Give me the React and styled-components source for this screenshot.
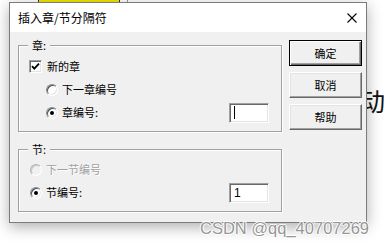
import React from "react";
import styled, { createGlobalStyle } from "styled-components";

const GlobalStyle = createGlobalStyle`
  *, *::before, *::after { box-sizing: border-box; }
  html, body { margin: 0; padding: 0; background: #fff; }
  body { font-family: "Noto Sans CJK SC", "Liberation Sans", sans-serif; }
`;

const Desk = styled.div`
  position: relative;
  width: 386px;
  height: 247px;
  overflow: hidden;
  background: #fff;
`;

const YellowMark = styled.div`
  position: absolute;
  left: 38px;
  top: 0;
  width: 82px;
  height: 2px;
  background: #f2e600;
  border-left: 1px solid #333;
  border-right: 1px solid #333;
`;

const GreyMark = styled.div`
  position: absolute;
  left: 127px;
  top: 0;
  width: 1px;
  height: 2px;
  background: #999;
`;

const BehindText = styled.span`
  position: absolute;
  left: 360px;
  top: 86px;
  font-size: 25px;
  line-height: 28px;
  color: #111;
`;

const Window = styled.div`
  position: absolute;
  z-index: 1;
  left: 9px;
  top: 2px;
  width: 358px;
  height: 221px;
  border: 1px solid #7c7c7c;
  background: #f0f0f0;
  box-shadow: 0 4px 14px rgba(0, 0, 0, 0.32);
  display: flex;
  flex-direction: column;
`;

const TitleBar = styled.div`
  height: 29px;
  flex: none;
  background: #fff;
  display: flex;
  align-items: center;
  justify-content: space-between;
  padding: 0 9px 0 8px;
`;

const Title = styled.span`
  font-size: 12px;
  line-height: 14px;
  color: #000;
`;

const Body = styled.div`
  display: flex;
  align-items: flex-start;
  padding: 8px 0 0 8px;
`;

const LeftColumn = styled.div`
  width: 264px;
  padding-top: 5px;
  display: flex;
  flex-direction: column;
  gap: 17px;
`;

const GroupBox = styled.div`
  position: relative;
  border: 1px solid #a0a0a0;
  box-shadow: inset 1px 1px 0 #fff, 1px 1px 0 #fff;
  padding: ${(p) => p.$pad};
  display: flex;
  flex-direction: column;
`;

const Legend = styled.span`
  position: absolute;
  left: 9px;
  top: -8px;
  padding: 0 4px;
  background: #f0f0f0;
  font-size: 11px;
  line-height: 14px;
  color: #000;
`;

const Row = styled.div`
  height: 23px;
  display: flex;
  align-items: center;
  padding-left: ${(p) => p.$indent || 0}px;
  padding-right: 12px;
`;

const Label = styled.span`
  font-size: 11px;
  line-height: 13px;
  margin-left: ${(p) => p.$gap}px;
  color: ${(p) => (p.$disabled ? "#a0a0a0" : "#000")};
  text-shadow: ${(p) => (p.$disabled ? "1px 1px 0 #fff" : "none")};
`;

const CheckBox = styled.span`
  width: 13px;
  height: 13px;
  flex: none;
  background: #fff;
  border: 1px solid;
  border-color: #a0a0a0 #fff #fff #a0a0a0;
  box-shadow: inset 1px 1px 0 #696969, inset -1px -1px 0 #e3e3e3;
  display: flex;
  align-items: center;
  justify-content: center;
`;

const Radio = styled.span`
  width: 12px;
  height: 12px;
  flex: none;
  border-radius: 50%;
  background: ${(p) => (p.$disabled ? "#f0f0f0" : "#fff")};
  border: 1px solid;
  border-color: ${(p) =>
    p.$disabled ? "#b4b4b4 #fff #fff #b4b4b4" : "#8a8a8a #fff #fff #8a8a8a"};
  box-shadow: ${(p) =>
    p.$disabled
      ? "inset 1px 1px 0 #c8c8c8"
      : "inset 1px 1px 0 #505050, inset -1px -1px 0 #e3e3e3"};
  display: flex;
  align-items: center;
  justify-content: center;
`;

const Dot = styled.span`
  width: 4px;
  height: 4px;
  border-radius: 50%;
  background: #000;
`;

const TextBox = styled.span`
  margin-left: auto;
  width: 40px;
  height: 20px;
  flex: none;
  background: #fff;
  border: 1px solid;
  border-color: #a0a0a0 #fff #fff #a0a0a0;
  box-shadow: inset 1px 1px 0 #696969, inset -1px -1px 0 #e3e3e3;
  display: flex;
  align-items: center;
  padding-left: 4px;
  font-family: "Liberation Sans", sans-serif;
  font-size: 12px;
  color: #000;
`;

const Caret = styled.span`
  width: 1px;
  height: 13px;
  background: #000;
`;

const Buttons = styled.div`
  width: 73px;
  margin-left: 7px;
  display: flex;
  flex-direction: column;
  gap: 6px;
`;

const Button = styled.button`
  height: 26px;
  padding: 0;
  font-family: "Noto Sans CJK SC", sans-serif;
  font-size: 11px;
  line-height: 13px;
  color: #000;
  background: #f0f0f0;
  border: 1px solid;
  border-color: ${(p) => (p.$default ? "#000" : "#fff #696969 #696969 #fff")};
  box-shadow: ${(p) =>
    p.$default
      ? "inset 1px 1px 0 #fff, inset -1px -1px 0 #696969, inset -2px -2px 0 #a0a0a0"
      : "inset -1px -1px 0 #a0a0a0, inset 1px 1px 0 #e3e3e3"};
`;

const Watermark = styled.span`
  position: absolute;
  z-index: 2;
  left: 200px;
  top: 219px;
  font-family: "Liberation Sans", sans-serif;
  font-size: 16.5px;
  line-height: 18px;
  color: #979797;
  text-shadow: 1px 0 0 #fff, -1px 0 0 #fff, 0 1px 0 #fff, 0 -1px 0 #fff;
  white-space: nowrap;
`;

const CloseIcon = () => (
  <svg width="10" height="10" viewBox="0 0 10 10">
    <path d="M0.5 0.5 L9.5 9.5 M9.5 0.5 L0.5 9.5" stroke="#000" strokeWidth="1.1" />
  </svg>
);

const CheckMark = () => (
  <svg width="9" height="9" viewBox="0 0 9 9">
    <path d="M1 4.2 L3.3 6.6 L8 1.6" stroke="#000" strokeWidth="1.8" fill="none" />
  </svg>
);

export default function App() {
  return (
    <>
      <GlobalStyle />
      <Desk>
        <YellowMark />
        <GreyMark />
        <BehindText>动</BehindText>
        <Window>
          <TitleBar>
            <Title>插入章/节分隔符</Title>
            <CloseIcon />
          </TitleBar>
          <Body>
            <LeftColumn>
              <GroupBox $pad="9px 0 7px 10px">
                <Legend>章:</Legend>
                <Row>
                  <CheckBox>
                    <CheckMark />
                  </CheckBox>
                  <Label $gap={5}>新的章</Label>
                </Row>
                <Row $indent={17}>
                  <Radio />
                  <Label $gap={4}>下一章编号</Label>
                </Row>
                <Row $indent={17}>
                  <Radio>
                    <Dot />
                  </Radio>
                  <Label $gap={4}>章编号:</Label>
                  <TextBox>
                    <Caret />
                  </TextBox>
                </Row>
              </GroupBox>
              <GroupBox $pad="8px 0 7px 10px">
                <Legend>节:</Legend>
                <Row $indent={1}>
                  <Radio $disabled />
                  <Label $gap={4} $disabled>
                    下一节编号
                  </Label>
                </Row>
                <Row $indent={1}>
                  <Radio>
                    <Dot />
                  </Radio>
                  <Label $gap={4}>节编号:</Label>
                  <TextBox>1</TextBox>
                </Row>
              </GroupBox>
            </LeftColumn>
            <Buttons>
              <Button $default>确定</Button>
              <Button>取消</Button>
              <Button>帮助</Button>
            </Buttons>
          </Body>
        </Window>
        <Watermark>CSDN @qq_40707269</Watermark>
      </Desk>
    </>
  );
}
